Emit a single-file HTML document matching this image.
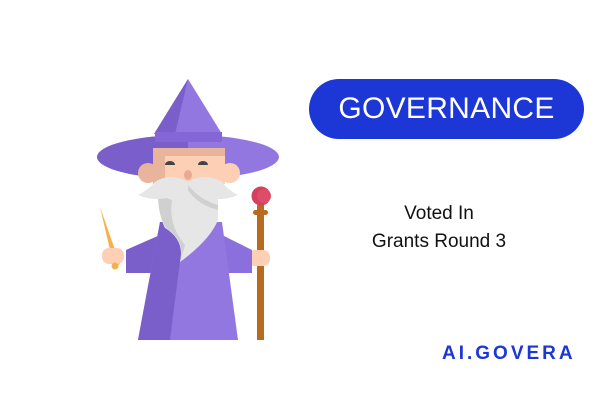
<!DOCTYPE html>
<html><head><meta charset="utf-8"><style>
html,body{margin:0;padding:0;background:#fff;width:600px;height:400px;overflow:hidden;font-family:"Liberation Sans",sans-serif}
.pill{position:absolute;left:309px;top:79px;width:275px;height:60px;border-radius:30px;background:#1c37d6;color:#fff;font-size:30px;line-height:60px;text-align:center;letter-spacing:0.3px}
.t{position:absolute;left:330px;width:218px;text-align:center;font-size:19px;color:#111}
.logo{position:absolute;left:442px;top:343px;font-size:19px;font-weight:bold;color:#1c37d6;letter-spacing:3px}
</style></head><body>
<svg width="600" height="400" style="position:absolute;left:0;top:0">
<!-- staff -->
<rect x="257" y="205" width="7" height="135" fill="#b86a1f"/>
<rect x="253" y="210" width="15" height="5" rx="2.5" fill="#b86a1f"/>
<circle cx="261" cy="196" r="9.5" fill="#d5405e"/>
<circle cx="264" cy="196" r="7" fill="#dc4d6a"/>
<!-- wand -->
<path d="M100 207 L120 264 L114 267 Z" fill="#f6b24a"/>
<!-- hands -->
<rect x="102" y="248" width="22" height="16" rx="7" fill="#fdd0b5"/>
<rect x="248" y="250" width="22" height="16" rx="7" fill="#fdd0b5"/>
<circle cx="115" cy="266" r="3.5" fill="#f6b24a"/>
<!-- robe -->
<path d="M126 250 L160 235 L160 273 L126 273 Z" fill="#7a5fcb"/>
<path d="M222 235 L252 250 L252 273 L222 273 Z" fill="#8b6fdc"/>
<path d="M160 222 L222 222 L238 340 L138 340 Z" fill="#9277e0"/>
<path d="M160 222 L185 222 L170 340 L138 340 Z" fill="#7a5fcb"/>
<!-- brim -->
<ellipse cx="188" cy="157" rx="91" ry="22" fill="#9277e0"/>
<path d="M97 157 A91 22 0 0 1 188 135 L188 179 A91 22 0 0 1 97 157Z" fill="#7a5fcb"/>
<!-- cone -->
<path d="M188 79 L222 134 L154 134 Z" fill="#9277e0"/>
<path d="M188 79 L175 134 L154 134 Z" fill="#7a5fcb"/>
<path d="M155 132 L222 132 L222 142 L155 142Z" fill="#8466d6"/>
<!-- ears -->
<circle cx="148" cy="173" r="10" fill="#e8b59c"/>
<circle cx="230" cy="173" r="10" fill="#fdd0b5"/>
<!-- face -->
<rect x="153" y="148" width="72" height="36" fill="#fdd0b5"/>
<rect x="153" y="148" width="72" height="8" fill="#e8b59c"/>
<rect x="153" y="148" width="12" height="36" fill="#e8b59c"/>
<path d="M165 165 a5 4 0 0 1 10 0 Z" fill="#444"/>
<path d="M198 165 a5 4 0 0 1 10 0 Z" fill="#444"/>
<ellipse cx="188" cy="175" rx="4" ry="5" fill="#e8ab92"/>
<!-- beard -->
<path d="M158 190 L218 190 L218 220 Q210 240 180 262 Q185 240 165 228 Q158 215 158 190 Z" fill="#e6e6e6"/>
<path d="M158 195 L172 200 Q168 225 185 245 L180 262 Q186 240 166 228 Q158 215 158 195Z" fill="#d0d0d0"/>
<path d="M188 182 Q170 172 155 182 Q148 190 138 195 Q160 205 188 190 Q216 205 238 195 Q228 190 222 182 Q205 172 188 182Z" fill="#e6e6e6"/>
<path d="M188 185 Q200 200 218 205 L218 210 Q198 205 188 190Z" fill="#d0d0d0"/>
</svg>
<div class="pill">GOVERNANCE</div>
<div class="t" style="top:203px">Voted In</div>
<div class="t" style="top:231px">Grants Round 3</div>
<div class="logo">AI.GOVERA</div>
</body></html>
